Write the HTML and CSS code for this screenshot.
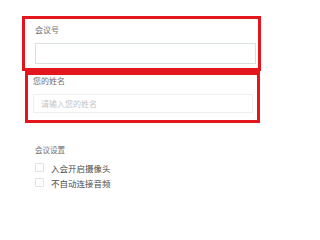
FILE: index.html
```html
<!DOCTYPE html>
<html lang="zh-CN">
<head>
<meta charset="utf-8">
<link rel="stylesheet" href="styles.css">
</head>
<body>
<div class="page">
  <div class="box box-id">
    <div class="label">会议号</div>
    <div class="input input-id"></div>
  </div>
  <div class="box box-name">
    <div class="label">您的姓名</div>
    <div class="input input-name"><span class="placeholder">请输入您的姓名</span></div>
  </div>
  <div class="settings">
    <div class="label small">会议设置</div>
    <div class="check-row"><span class="check"></span><span class="check-text">入会开启摄像头</span></div>
    <div class="check-row"><span class="check"></span><span class="check-text">不自动连接音频</span></div>
  </div>
</div>
</body>
</html>
```
FILE: styles.css
```css
html, body {
  margin: 0;
  padding: 0;
  background: #fff;
}
body {
  width: 280px;
  height: 209px;
  overflow: hidden;
  font-family: "Noto Sans CJK SC", "Noto Sans", sans-serif;
}
.page {
  padding-top: 16px;
}
.box {
  border: 3px solid #e3161e;
  box-sizing: border-box;
}
.box-id {
  margin-left: 22px;
  width: 239px;
  height: 55px;
  padding: 6px 2px 0 10px;
}
.box-name {
  margin-left: 25px;
  width: 235px;
  height: 52px;
  padding: 1px 4px 0 5px;
  border-top-width: 4px;
}
.label {
  font-size: 8px;
  line-height: 10px;
  color: #707070;
}
.input {
  box-sizing: border-box;
  border: 1px solid #d8e0e2;
  background: #fff;
}
.input-id {
  margin-top: 8px;
  height: 21px;
}
.input-name {
  margin-top: 8px;
  height: 19px;
  display: flex;
  align-items: center;
  padding-left: 7px;
  border-color: #eceeef;
}
.placeholder {
  font-size: 8px;
  color: #c4c4c4;
}
.settings {
  margin-top: 22px;
  padding-left: 35px;
}
.label.small {
  font-size: 7.5px;
  margin-bottom: 5px;
}
.check-row {
  display: flex;
  align-items: center;
  height: 15px;
}
.check {
  width: 9px;
  height: 9px;
  box-sizing: border-box;
  border: 1px solid #e2e2e2;
  border-radius: 1px;
}
.check-text {
  margin-left: 7px;
  font-size: 8.5px;
  color: #4a4a4a;
}
```
